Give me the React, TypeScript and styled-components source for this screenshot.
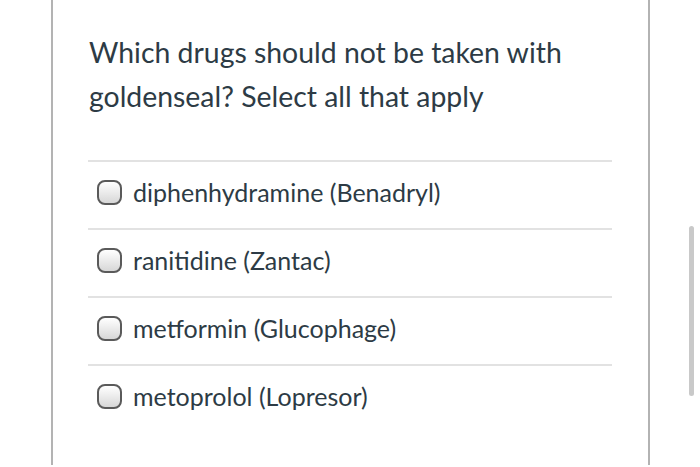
import React from "react";
import styled, { createGlobalStyle } from "styled-components";

const Global = createGlobalStyle`
  html, body { margin: 0; padding: 0; background: #fff; }
  body { font-family: Lato, "Open Sans", sans-serif; color: #2d3b45; overflow: hidden; }
`;

const Page = styled.div`
  position: relative;
  width: 700px;
  height: 467px;
  overflow: hidden;
`;

const Card = styled.div`
  margin-left: 51px;
  width: 599px;
  height: 465px;
  border-left: 2px solid #b3b3b3;
  border-right: 2px solid #b3b3b3;
  padding: 30px 36px 0 36px;
  box-sizing: border-box;
`;

const Question = styled.h2`
  margin: 0;
  font-size: 28.4px;
  font-weight: 400;
  line-height: 44px;
`;

const List = styled.div`
  margin-top: 42px;
  margin-left: -1px;
  display: flex;
  flex-direction: column;
`;

const Row = styled.label`
  display: flex;
  align-items: center;
  gap: 11px;
  height: 66px;
  border-top: 2px solid #e2e2e2;
  padding-left: 9px;
  padding-bottom: 6px;
  box-sizing: content-box;
  height: 60px;
  font-size: 25px;
`;

const Radio = styled.span`
  width: 21px;
  height: 21px;
  border: 2px solid #5a5a5a;
  border-radius: 8px;
  background: linear-gradient(#ffffff, #d7d7d7);
  flex: none;
  margin-top: 1px;
`;

const Scrollbar = styled.div`
  position: absolute;
  left: 689px;
  top: 226px;
  width: 5px;
  height: 170px;
  border-radius: 3px;
  background: #c9c9c9;
`;

const options = [
  "diphenhydramine (Benadryl)",
  "ranitidine (Zantac)",
  "metformin (Glucophage)",
  "metoprolol (Lopresor)",
];

export default function App() {
  return (
    <Page>
      <Global />
      <Card>
        <Question>
          Which drugs should not be taken with
          <br />
          goldenseal? Select all that apply
        </Question>
        <List>
          {options.map((o) => (
            <Row key={o}>
              <Radio />
              <span>{o}</span>
            </Row>
          ))}
        </List>
      </Card>
      <Scrollbar />
    </Page>
  );
}
